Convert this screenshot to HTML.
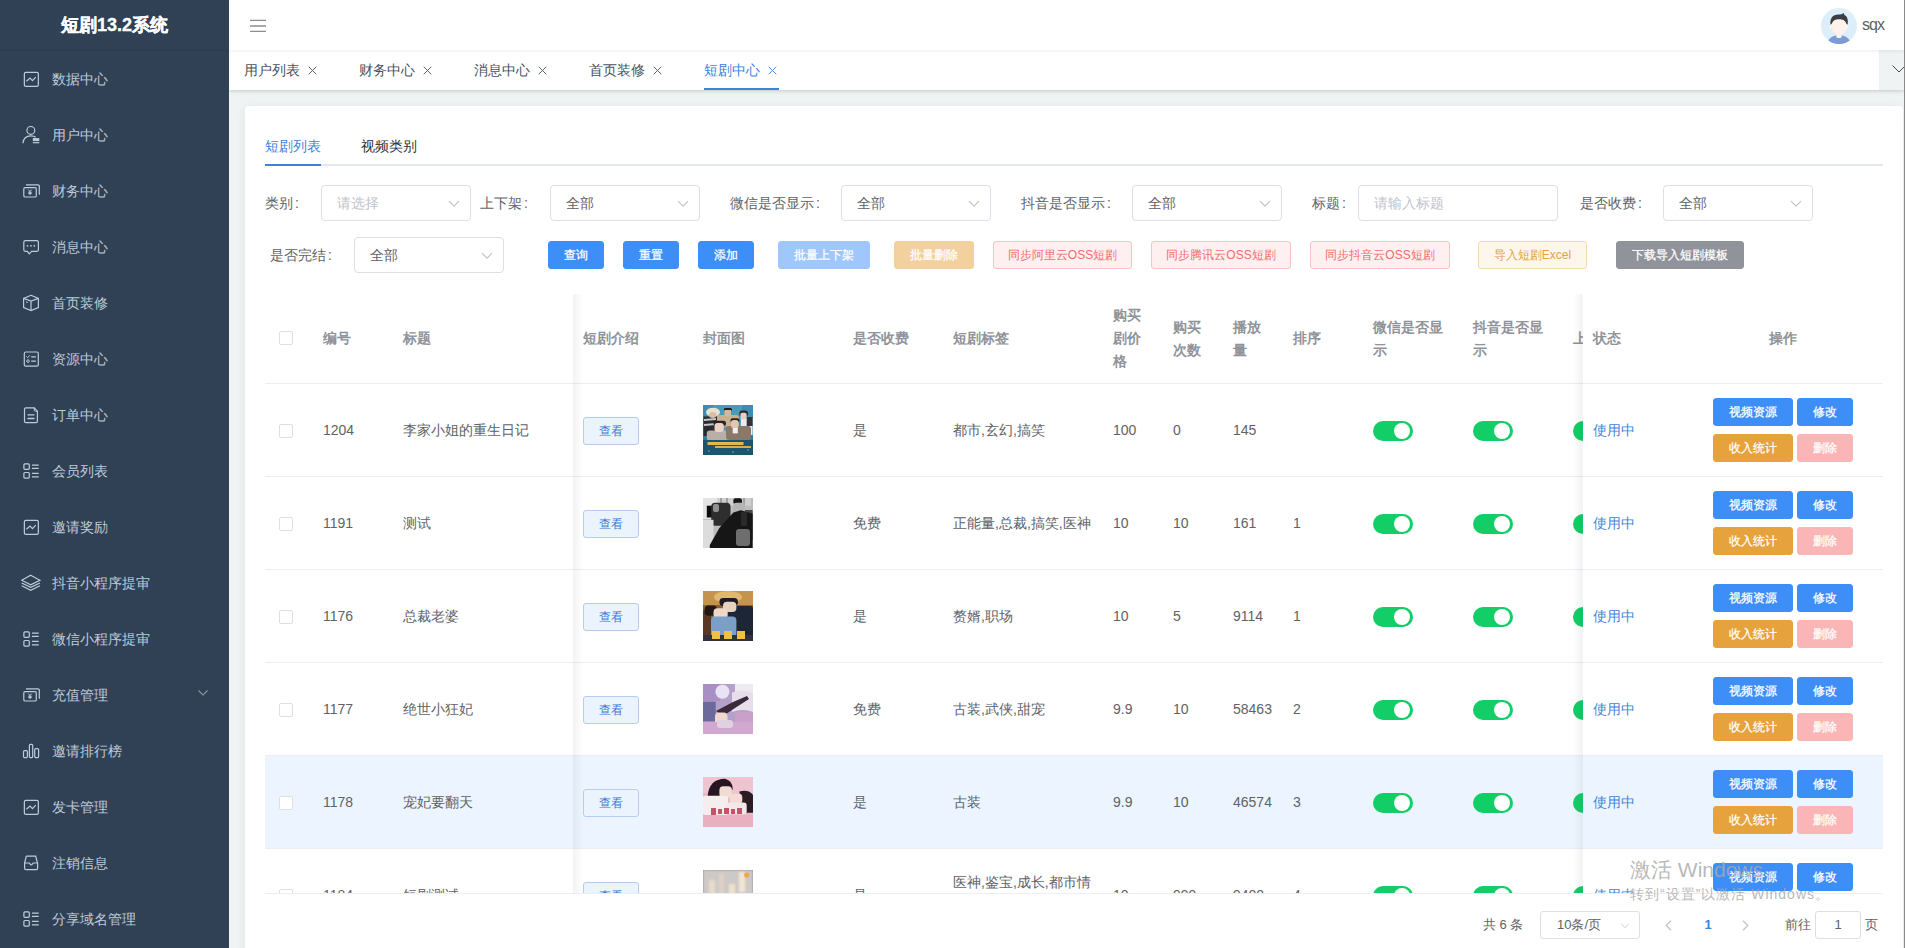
<!DOCTYPE html><html><head><meta charset="utf-8"><style>*{box-sizing:border-box;margin:0;padding:0}
html,body{width:1905px;height:948px;overflow:hidden;background:#eff3f4;font-family:"Liberation Sans",sans-serif;font-size:14px;color:#606266;position:relative}
.a{position:absolute}
#sb{left:0;top:0;width:229px;height:948px;background:#304156;z-index:10}
#logo{left:0;top:0;width:229px;height:50px;background:#304156;color:#fff;font-weight:bold;-webkit-text-stroke:.3px #fff;font-size:18px;line-height:50px;text-align:center;box-shadow:0 1px 0 rgba(0,0,0,.05)}
.mi{left:0;width:229px;height:56px;line-height:56px;color:#bfcbd9;font-size:14px}
.mi span{position:absolute;left:52px;top:1px}
.mi svg{position:absolute;left:21px;top:19px;width:20px;height:20px;fill:none;stroke:#bfcbd9;stroke-width:1.2}
.mi svg.chev{left:198px;top:24px;width:10px;height:6px;stroke:#909399;stroke-width:1.1}
#nav{left:229px;top:0;width:1676px;height:50px;background:#fff;box-shadow:0 1px 4px rgba(0,0,0,.08);z-index:8}
#tags{left:229px;top:50px;width:1676px;height:40px;background:#fff;box-shadow:0 1px 3px 0 rgba(0,0,0,.12),0 2px 6px 0 rgba(0,0,0,.05);z-index:7}
.tg{top:0;height:40px;line-height:40px;font-size:14px;white-space:nowrap}
#card{left:245px;top:106px;width:1658px;height:900px;background:#fff;border-radius:4px;box-shadow:0 2px 12px 0 rgba(0,0,0,.06)}
.lbl b{font-weight:normal;margin-left:2px}
.lbl{height:36px;line-height:36px;color:#606266;font-size:14px;white-space:nowrap}
.sel{height:36px;border:1px solid #dcdfe6;border-radius:4px;background:#fff;line-height:34px;padding-left:15px;color:#606266;font-size:14px;white-space:nowrap}
.sel.ph{color:#c0c4cc}
.sel svg{position:absolute;right:10px;top:14px;width:12px;height:8px;fill:none;stroke:#c0c4cc;stroke-width:1.2}
.btn{height:28px;line-height:27px;border:1px solid transparent;border-radius:3px;font-size:12px;text-align:center;white-space:nowrap;color:#fff}
.bp{background:#3e8ef7;border-color:#3e8ef7}
.bpd{background:#9fc7fb;border-color:#9fc7fb}
.bwd{background:#f3d19e;border-color:#f3d19e}
.bdp{background:#fef0f0;border-color:#fbc4c4;color:#f56c6c}
.bwp{background:#fdf6ec;border-color:#f5dab1;color:#e6a23c}
.bi{background:#909399;border-color:#909399}
.bw{background:#e6a23c;border-color:#e6a23c}
.bdd{background:#fab6b6;border-color:#fab6b6}
.bpp{background:#ebf4fd;border-color:#b5cdee;color:#3a7ad6}
.th{font-weight:bold;color:#909399;line-height:23px;font-size:14px;white-space:nowrap}
.td{color:#606266;line-height:23px;font-size:14px;white-space:nowrap}
.hl{height:1px;background:#ebeef5}
.cb{width:14px;height:14px;border:1px solid #dcdfe6;border-radius:2px;background:#fff}
.sw{width:40px;height:20px;border-radius:10px;background:#13ce66}
.sw i{position:absolute;left:21px;top:2px;width:16px;height:16px;border-radius:50%;background:#fff}
.thumb{width:50px;height:50px;background:#888}
.t1{background:linear-gradient(180deg,#2f7d99 0%,#6f8a8e 30%,#b5a89a 55%,#3f5a66 75%,#1f5a78 100%)}
.t2{background:linear-gradient(135deg,#ddd 0%,#333 40%,#111 70%,#555 100%)}
.t3{background:linear-gradient(180deg,#b58a4a 0%,#7a5a3a 40%,#3a4a6a 70%,#2a2a3a 100%)}
.t4{background:linear-gradient(180deg,#a99ac8 0%,#c8b8d8 40%,#d8c8e0 70%,#c8a8d0 100%)}
.t5{background:linear-gradient(180deg,#e8b8c8 0%,#f0d8e0 40%,#f0c8d0 70%,#f0b8c8 100%)}
.t6{background:linear-gradient(90deg,#d0ccc8,#e8dcc8,#d0ccc8)}
.pg{height:28px;line-height:28px;font-size:13px;color:#606266;white-space:nowrap}
.psel{height:28px;width:100px;border:1px solid #dcdfe6;border-radius:3px;line-height:26px;padding-left:16px;font-size:13px;color:#606266;white-space:nowrap}
.psel svg{position:absolute;right:9px;top:11px;width:10px;height:6px;fill:none;stroke:#c0c4cc;stroke-width:1.1}
.wm1{font-size:21px;color:rgba(168,168,168,.82);white-space:nowrap;z-index:20}
.wm2{font-size:14px;letter-spacing:1px;color:rgba(168,168,168,.82);white-space:nowrap;z-index:20}

.bp,.bw,.bi,.bpd,.bwd,.bdd{-webkit-text-stroke:.25px #fff}
</style></head><body>
<div id="sb" class="a"><div id="logo" class="a">短剧13.2系统</div>
<div class="mi a" style="top:50px"><svg viewBox="0 0 20 20"><rect x="3.36" y="3.36" width="14" height="14.1" rx="1.6"/><path d="M5.4 12.2L9 9l2.5 2.7 3.2-3.5"/></svg><span>数据中心</span>
</div>
<div class="mi a" style="top:106px"><svg viewBox="0 0 20 20"><circle cx="9.85" cy="5.4" r="3.9"/><path d="M1.9 18.3C2.4 13.5 5.5 10.9 9.8 10.9c2 0 3.7.4 4.9 1.4"/><rect x="11.8" y="13.1" width="6.5" height="3" fill="#bfcbd9" stroke="none"/><rect x="11.8" y="17.1" width="6.5" height="1.2" fill="#bfcbd9" stroke="none"/></svg><span>用户中心</span>
</div>
<div class="mi a" style="top:162px"><svg viewBox="0 0 20 20"><rect x="2.8" y="6.6" width="12.5" height="9.4" rx="1.3"/><path d="M5 3.8H17a1.3 1.3 0 0 1 1.3 1.3V13.8"/><path d="M7.4 8.6L9 10.8 10.6 8.6M9 10.8V14M7.3 11.3H10.7M7.3 12.6H10.7" stroke-width="1"/></svg><span>财务中心</span>
</div>
<div class="mi a" style="top:218px"><svg viewBox="0 0 20 20"><path d="M4.4 3.6H15.8a1.6 1.6 0 0 1 1.6 1.6v7.6A1.6 1.6 0 0 1 15.8 14.4H10.6L8.2 16.8 6.4 14.4H4.4A1.6 1.6 0 0 1 2.8 12.8V5.2a1.6 1.6 0 0 1 1.6-1.6z"/><circle cx="6.5" cy="8.8" r=".9" fill="#bfcbd9" stroke="none"/><circle cx="10" cy="8.8" r=".9" fill="#bfcbd9" stroke="none"/><circle cx="13.3" cy="8.8" r=".9" fill="#bfcbd9" stroke="none"/></svg><span>消息中心</span>
</div>
<div class="mi a" style="top:274px"><svg viewBox="0 0 20 20"><path d="M10 2.3L17.4 5.4V14.6L10 17.6 2.6 14.6V5.4z"/><path d="M2.6 5.4L10 8 17.4 5.4M10 8V17.6"/><path d="M5 8.9L6.8 9.6" stroke-width="1"/></svg><span>首页装修</span>
</div>
<div class="mi a" style="top:330px"><svg viewBox="0 0 20 20"><rect x="3.3" y="3" width="14" height="14.2" rx="1.4"/><path d="M5.3 7.3L6.7 8.7 8.8 6.3" stroke-width="1"/><circle cx="7" cy="12.1" r="1.3" stroke-width="1"/><path d="M10.2 7.9H14.9M10.2 12.2H14.9" stroke-width="1.3"/></svg><span>资源中心</span>
</div>
<div class="mi a" style="top:386px"><svg viewBox="0 0 20 20"><path d="M4.9 2.9H13.3L16.4 6.2V16.2A1.4 1.4 0 0 1 15 17.6H4.9A1.4 1.4 0 0 1 3.5 16.2V4.3A1.4 1.4 0 0 1 4.9 2.9z"/><path d="M13.3 2.9V5a1.2 1.2 0 0 0 1.2 1.2H16.4" stroke-width="1"/><path d="M6.5 9.8H13.5M6.5 13.5H13.5" stroke-width="1.3"/></svg><span>订单中心</span>
</div>
<div class="mi a" style="top:442px"><svg viewBox="0 0 20 20"><rect x="2.9" y="2.9" width="5.4" height="5.4" rx="1"/><rect x="2.9" y="11.5" width="5.4" height="5.6" rx="1"/><path d="M10.9 4.1H17.7M10.9 7.3H17.7M10.9 12.4H17.7M10.9 15.9H17.7" stroke-width="1.2"/></svg><span>会员列表</span>
</div>
<div class="mi a" style="top:498px"><svg viewBox="0 0 20 20"><rect x="3.36" y="3.36" width="14" height="14.1" rx="1.6"/><path d="M5.4 12.2L9 9l2.5 2.7 3.2-3.5"/></svg><span>邀请奖励</span>
</div>
<div class="mi a" style="top:554px"><svg viewBox="0 0 20 20"><path d="M9.7 2.2L18.9 7.3 9.7 11.8 0.7 7.3z"/><path d="M0.7 10L9.7 14.4 18.9 10M0.7 12.7L9.7 17.4 18.9 12.7"/></svg><span>抖音小程序提审</span>
</div>
<div class="mi a" style="top:610px"><svg viewBox="0 0 20 20"><rect x="2.9" y="2.9" width="5.4" height="5.4" rx="1"/><rect x="2.9" y="11.5" width="5.4" height="5.6" rx="1"/><path d="M10.9 4.1H17.7M10.9 7.3H17.7M10.9 12.4H17.7M10.9 15.9H17.7" stroke-width="1.2"/></svg><span>微信小程序提审</span>
</div>
<div class="mi a" style="top:666px"><svg viewBox="0 0 20 20"><rect x="2.8" y="6.6" width="12.5" height="9.4" rx="1.3"/><path d="M5 3.8H17a1.3 1.3 0 0 1 1.3 1.3V13.8"/><path d="M7.4 8.6L9 10.8 10.6 8.6M9 10.8V14M7.3 11.3H10.7M7.3 12.6H10.7" stroke-width="1"/></svg><span>充值管理</span>
<svg class="chev" viewBox="0 0 10 6"><path d="M.5.5L5 5 9.5.5"/></svg>
</div>
<div class="mi a" style="top:722px"><svg viewBox="0 0 20 20"><rect x="2.5" y="9.7" width="3.9" height="6.9" rx="1"/><rect x="8.4" y="3.4" width="3.3" height="13.2" rx="1"/><rect x="13.7" y="7.6" width="3.9" height="9" rx="1"/></svg><span>邀请排行榜</span>
</div>
<div class="mi a" style="top:778px"><svg viewBox="0 0 20 20"><rect x="3.36" y="3.36" width="14" height="14.1" rx="1.6"/><path d="M5.4 12.2L9 9l2.5 2.7 3.2-3.5"/></svg><span>发卡管理</span>
</div>
<div class="mi a" style="top:834px"><svg viewBox="0 0 20 20"><path d="M5.3 3.2H14.7L16.4 10M5.3 3.2L3.6 10"/><path d="M3.6 10H8.2C8.9 10 9.2 12 10.2 12S11.6 10 12.3 10H16.6V15.3A1.3 1.3 0 0 1 15.3 16.6H4.9A1.3 1.3 0 0 1 3.6 15.3z"/></svg><span>注销信息</span>
</div>
<div class="mi a" style="top:890px"><svg viewBox="0 0 20 20"><rect x="2.9" y="2.9" width="5.4" height="5.4" rx="1"/><rect x="2.9" y="11.5" width="5.4" height="5.6" rx="1"/><path d="M10.9 4.1H17.7M10.9 7.3H17.7M10.9 12.4H17.7M10.9 15.9H17.7" stroke-width="1.2"/></svg><span>分享域名管理</span>
</div>
</div>
<div id="nav" class="a">
<svg class="a" style="left:21px;top:19px;width:16px;height:14px" viewBox="0 0 16 14"><path d="M0 1.3H16M0 7H16M0 12.4H16" stroke="#8b8e93" stroke-width="1.3"/></svg>
<svg class="a" style="left:1592px;top:8px;width:36px;height:36px" viewBox="0 0 36 36">
<defs><clipPath id="cc"><circle cx="18" cy="18" r="18"/></clipPath></defs>
<circle cx="18" cy="18" r="18" fill="#ddeefb"/>
<g clip-path="url(#cc)">
<path d="M5.5 37C7 30 12 27.3 18 27.3S29 30 30.5 37z" fill="#7b9bd6"/>
<path d="M15.3 23H20.7V29.2Q18 31 15.3 29.2z" fill="#fdf3ea"/>
<ellipse cx="18" cy="18.3" rx="8" ry="8" fill="#fdf3ea"/>
<ellipse cx="9.6" cy="18.8" rx="1.4" ry="1.8" fill="#fdf3ea"/><ellipse cx="26.4" cy="18.8" rx="1.4" ry="1.8" fill="#fdf3ea"/>
<path d="M9.4 16.8C8.8 9.5 12.5 6.6 17.5 6.6C19.5 6.6 21 5.9 22.8 4.9L23.4 6.9C26.3 8 27.4 11.5 26.6 16.8L25.2 15.6C24.6 12.5 21.8 11.2 18 11.2S11.6 12.5 10.9 15.6z" fill="#3a3d44"/>
</g></svg>
<div class="a" style="left:1633px;top:0;height:50px;line-height:50px;font-size:16px;letter-spacing:-1px;color:#606266">sqx</div>
</div>
<div class="a" style="left:1904px;top:0;width:1px;height:948px;background:#8a8a8a;z-index:50"></div>
<div id="tags" class="a">
<div class="tg a" style="left:15px;color:#495060">用户列表</div>
<svg class="a" style="left:79px;top:16px;width:9px;height:9px" viewBox="0 0 9 9"><path d="M.7.7L8.3 8.3M8.3.7L.7 8.3" stroke="#495060" stroke-width="1" opacity=".9"/></svg>
<div class="tg a" style="left:130px;color:#495060">财务中心</div>
<svg class="a" style="left:194px;top:16px;width:9px;height:9px" viewBox="0 0 9 9"><path d="M.7.7L8.3 8.3M8.3.7L.7 8.3" stroke="#495060" stroke-width="1" opacity=".9"/></svg>
<div class="tg a" style="left:245px;color:#495060">消息中心</div>
<svg class="a" style="left:309px;top:16px;width:9px;height:9px" viewBox="0 0 9 9"><path d="M.7.7L8.3 8.3M8.3.7L.7 8.3" stroke="#495060" stroke-width="1" opacity=".9"/></svg>
<div class="tg a" style="left:360px;color:#495060">首页装修</div>
<svg class="a" style="left:424px;top:16px;width:9px;height:9px" viewBox="0 0 9 9"><path d="M.7.7L8.3 8.3M8.3.7L.7 8.3" stroke="#495060" stroke-width="1" opacity=".9"/></svg>
<div class="tg a" style="left:475px;color:#3d82dd">短剧中心</div>
<svg class="a" style="left:539px;top:16px;width:9px;height:9px" viewBox="0 0 9 9"><path d="M.7.7L8.3 8.3M8.3.7L.7 8.3" stroke="#3d82dd" stroke-width="1" opacity=".9"/></svg>
<div class="a" style="left:475px;top:38px;width:75px;height:2px;background:#3d82dd"></div>
<div class="a" style="left:1650px;top:0;width:26px;height:40px;background:#eff3f4"></div>
<svg class="a" style="left:1663px;top:15px;width:14px;height:8px" viewBox="0 0 14 8"><path d="M.5.5L7 7 13.5.5" fill="none" stroke="#4a4d52" stroke-width="1"/></svg>
</div>
<div id="card" class="a">
<div class="a" style="left:20px;top:28px;line-height:24px;color:#3d82dd">短剧列表</div>
<div class="a" style="left:116px;top:28px;line-height:24px;color:#303133">视频类别</div>
<div class="a" style="left:20px;top:58px;width:1618px;height:2px;background:#e4e7ed"></div>
<div class="a" style="left:20px;top:58px;width:56px;height:2px;background:#3d82dd"></div>
<div class="lbl a" style="left:20px;top:79px">类别<b>:</b></div>
<div class="sel a ph" style="left:76px;top:79px;width:150px">请选择<svg viewBox="0 0 12 8"><path d="M1 1.2L6 6.2 11 1.2"/></svg></div>
<div class="lbl a" style="left:235px;top:79px">上下架<b>:</b></div>
<div class="sel a" style="left:305px;top:79px;width:150px">全部<svg viewBox="0 0 12 8"><path d="M1 1.2L6 6.2 11 1.2"/></svg></div>
<div class="lbl a" style="left:485px;top:79px">微信是否显示<b>:</b></div>
<div class="sel a" style="left:596px;top:79px;width:150px">全部<svg viewBox="0 0 12 8"><path d="M1 1.2L6 6.2 11 1.2"/></svg></div>
<div class="lbl a" style="left:776px;top:79px">抖音是否显示<b>:</b></div>
<div class="sel a" style="left:887px;top:79px;width:150px">全部<svg viewBox="0 0 12 8"><path d="M1 1.2L6 6.2 11 1.2"/></svg></div>
<div class="lbl a" style="left:1067px;top:79px">标题<b>:</b></div>
<div class="sel a ph" style="left:1113px;top:79px;width:200px">请输入标题</div>
<div class="lbl a" style="left:1335px;top:79px">是否收费<b>:</b></div>
<div class="sel a" style="left:1418px;top:79px;width:150px">全部<svg viewBox="0 0 12 8"><path d="M1 1.2L6 6.2 11 1.2"/></svg></div>
<div class="lbl a" style="left:25px;top:131px">是否完结<b>:</b></div>
<div class="sel a" style="left:109px;top:131px;width:150px">全部<svg viewBox="0 0 12 8"><path d="M1 1.2L6 6.2 11 1.2"/></svg></div>
<div class="btn bp a" style="left:303px;top:135px;width:56px">查询</div>
<div class="btn bp a" style="left:378px;top:135px;width:56px">重置</div>
<div class="btn bp a" style="left:453px;top:135px;width:56px">添加</div>
<div class="btn bpd a" style="left:533px;top:135px;width:92px">批量上下架</div>
<div class="btn bwd a" style="left:649px;top:135px;width:80px">批量删除</div>
<div class="btn bdp a" style="left:748px;top:135px;width:139px">同步阿里云OSS短剧</div>
<div class="btn bdp a" style="left:906px;top:135px;width:140px">同步腾讯云OSS短剧</div>
<div class="btn bdp a" style="left:1065px;top:135px;width:140px">同步抖音云OSS短剧</div>
<div class="btn bwp a" style="left:1233px;top:135px;width:109px">导入短剧Excel</div>
<div class="btn bi a" style="left:1371px;top:135px;width:128px">下载导入短剧模板</div>
<div id="tbl" class="a" style="left:20px;top:188px;width:1618px;height:599px;overflow:hidden">
<div class="th a" style="left:58px;top:33.0px">编号</div>
<div class="th a" style="left:138px;top:33.0px">标题</div>
<div class="th a" style="left:318px;top:33.0px">短剧介绍</div>
<div class="th a" style="left:438px;top:33.0px">封面图</div>
<div class="th a" style="left:588px;top:33.0px">是否收费</div>
<div class="th a" style="left:688px;top:33.0px">短剧标签</div>
<div class="th a" style="left:848px;top:10.0px">购买<br>剧价<br>格</div>
<div class="th a" style="left:908px;top:21.5px">购买<br>次数</div>
<div class="th a" style="left:968px;top:21.5px">播放<br>量</div>
<div class="th a" style="left:1028px;top:33.0px">排序</div>
<div class="th a" style="left:1108px;top:21.5px">微信是否显<br>示</div>
<div class="th a" style="left:1208px;top:21.5px">抖音是否显<br>示</div>
<div class="th a" style="left:1308px;top:33.0px">上下架</div>
<div class="cb a" style="left:14px;top:37px"></div>
<div class="hl a" style="left:0;top:89px;width:1618px"></div>
<div class="a" style="left:0;top:90px;width:1618px;height:92px;background:#fff"></div>
<div class="hl a" style="left:0;top:182px;width:1618px"></div>
<div class="cb a" style="left:14px;top:129.5px"></div>
<div class="td a" style="left:58px;top:125.0px">1204</div>
<div class="td a" style="left:138px;top:125.0px">李家小姐的重生日记</div>
<div class="btn bpp a" style="left:318px;top:122.5px;width:56px">查看</div>
<div class="thumb a" style="left:438px;top:111.0px"><svg viewBox="0 0 50 50" width="50" height="50" style="display:block"><defs><filter id="b1" x="-10%" y="-10%" width="120%" height="120%"><feGaussianBlur stdDeviation="0.45"/></filter></defs><g filter="url(#b1)">
<rect width="50" height="50" fill="#2f7a9c"/>
<path d="M25 0L18 36 0 20V0zM25 0L32 36 50 18V0z" fill="#3d8db0"/>
<path d="M25 0L22 36 10 0zM25 0L28 36 40 0z" fill="#4b9ab8"/>
<rect x="0.5" y="11.4" width="13.5" height="19.6" fill="#2c2c30"/>
<path d="M1 14L13 13 13 15 1 16zM1 19L13 18 13 20 1 21z" fill="#c8c8c8"/>
<ellipse cx="10" cy="7.2" rx="7" ry="4.5" fill="#e8e2cc"/>
<ellipse cx="9.7" cy="10" rx="3.7" ry="3" fill="#d8c0a8"/>
<rect x="14" y="10" width="22" height="11.8" rx="3" fill="#c8b090"/>
<rect x="20.8" y="3" width="8.2" height="3" rx="1.5" fill="#1e1e24"/>
<rect x="21.5" y="5" width="6.5" height="6.4" fill="#d8b898"/>
<rect x="37.8" y="13" width="11.8" height="17" fill="#e6eef0"/>
<rect x="36.3" y="5.5" width="8.7" height="6.5" rx="3" fill="#2a2a30"/>
<rect x="37.4" y="7.7" width="6.3" height="6.7" rx="2" fill="#e8d0c0"/>
<rect x="43.7" y="12" width="5.9" height="9" fill="#303038"/>
<rect x="3.8" y="25.5" width="26.6" height="10.3" rx="3" fill="#b8b0a8"/>
<rect x="10.5" y="15.8" width="12.5" height="5.2" rx="2.5" fill="#2a2228"/>
<rect x="11.5" y="18" width="9.3" height="9" rx="3" fill="#ecd4c4"/>
<rect x="23" y="21" width="25" height="14" rx="3" fill="#8a7868"/>
<rect x="29.7" y="21" width="5.1" height="7.4" fill="#f0f0f0"/>
<rect x="27.5" y="13.3" width="8.8" height="4.7" rx="2" fill="#242028"/>
<rect x="28" y="15" width="7.6" height="8" rx="2.5" fill="#e0c8b0"/>
<rect x="0" y="35" width="50" height="15" fill="#1c5470"/>
<rect x="4.5" y="37" width="36" height="3" fill="#e0b850"/>
<rect x="12" y="41" width="36" height="2" fill="#d0b050"/>
<circle cx="6" cy="46" r=".8" fill="#8ab"/><circle cx="30" cy="47" r=".8" fill="#8ab"/><circle cx="45" cy="45" r=".8" fill="#8ab"/>
</g></svg></div>
<div class="td a" style="left:588px;top:125.0px">是</div>
<div class="td a" style="left:688px;top:125.0px">都市,玄幻,搞笑</div>
<div class="td a" style="left:848px;top:125.0px">100</div>
<div class="td a" style="left:908px;top:125.0px">0</div>
<div class="td a" style="left:968px;top:125.0px">145</div>
<div class="td a" style="left:1028px;top:125.0px"></div>
<div class="sw a" style="left:1108px;top:126.5px"><i></i></div>
<div class="sw a" style="left:1208px;top:126.5px"><i></i></div>
<div class="sw a" style="left:1308px;top:126.5px"><i></i></div>
<div class="a" style="left:0;top:183px;width:1618px;height:92px;background:#fff"></div>
<div class="hl a" style="left:0;top:275px;width:1618px"></div>
<div class="cb a" style="left:14px;top:222.5px"></div>
<div class="td a" style="left:58px;top:218.0px">1191</div>
<div class="td a" style="left:138px;top:218.0px">测试</div>
<div class="btn bpp a" style="left:318px;top:215.5px;width:56px">查看</div>
<div class="thumb a" style="left:438px;top:204.0px"><svg viewBox="0 0 50 50" width="50" height="50" style="display:block"><defs><filter id="b2" x="-10%" y="-10%" width="120%" height="120%"><feGaussianBlur stdDeviation="0.5"/></filter></defs><g filter="url(#b2)">
<rect width="50" height="50" fill="#bcbcbc"/>
<rect x="0" y="0" width="15.6" height="21" fill="#e4e4e4"/>
<rect x="14" y="0" width="34" height="7.7" fill="#cfcfcf"/>
<path d="M17 0h2v8h-2zM23 0h2v8h-2zM40 0h2v9h-2z" fill="#a0a0a0"/>
<rect x="3.8" y="7.7" width="5.9" height="11.8" fill="#101010"/>
<rect x="8.2" y="4.8" width="19.3" height="23" rx="4" fill="#2e2e2e"/>
<rect x="10" y="6" width="6" height="8" rx="2" fill="#909090"/>
<rect x="30.4" y="0.3" width="8.6" height="6" rx="2" fill="#141414"/>
<rect x="30.4" y="4.8" width="11.6" height="14" rx="3" fill="#b4b4b4"/>
<rect x="42" y="12" width="7.6" height="29.7" fill="#4a4a4a"/>
<rect x="0" y="21.8" width="10.5" height="28.2" fill="#dcdcdc"/>
<path d="M6.8 46.9L16.4 29.9 30.4 14.4 37.8 12.2 49.6 15.8 49.6 50 6.8 50z" fill="#141414"/>
<rect x="33" y="31" width="14" height="17" rx="3" fill="#6e6e6e"/>
<rect x="38" y="14" width="6" height="14" fill="#2a2a2a"/>
</g></svg></div>
<div class="td a" style="left:588px;top:218.0px">免费</div>
<div class="td a" style="left:688px;top:218.0px">正能量,总裁,搞笑,医神</div>
<div class="td a" style="left:848px;top:218.0px">10</div>
<div class="td a" style="left:908px;top:218.0px">10</div>
<div class="td a" style="left:968px;top:218.0px">161</div>
<div class="td a" style="left:1028px;top:218.0px">1</div>
<div class="sw a" style="left:1108px;top:219.5px"><i></i></div>
<div class="sw a" style="left:1208px;top:219.5px"><i></i></div>
<div class="sw a" style="left:1308px;top:219.5px"><i></i></div>
<div class="a" style="left:0;top:276px;width:1618px;height:92px;background:#fff"></div>
<div class="hl a" style="left:0;top:368px;width:1618px"></div>
<div class="cb a" style="left:14px;top:315.5px"></div>
<div class="td a" style="left:58px;top:311.0px">1176</div>
<div class="td a" style="left:138px;top:311.0px">总裁老婆</div>
<div class="btn bpp a" style="left:318px;top:308.5px;width:56px">查看</div>
<div class="thumb a" style="left:438px;top:297.0px"><svg viewBox="0 0 50 50" width="50" height="50" style="display:block"><defs><filter id="b3" x="-10%" y="-10%" width="120%" height="120%"><feGaussianBlur stdDeviation="0.55"/></filter></defs><g filter="url(#b3)">
<rect width="50" height="50" fill="#8a6030"/>
<rect x="0" y="0" width="50" height="14" fill="#c49450"/>
<ellipse cx="25" cy="6" rx="14" ry="6" fill="#e0b870"/>
<rect x="0" y="19.5" width="8" height="30.5" fill="#5a3820"/>
<rect x="25" y="15" width="25" height="35" rx="3" fill="#1e2636"/>
<rect x="16.4" y="7" width="18.6" height="8" rx="4" fill="#1a1a22"/>
<rect x="20" y="10.7" width="13.4" height="10.3" rx="4" fill="#e6d2be"/>
<rect x="1.6" y="14.4" width="12.4" height="10.3" rx="4" fill="#201818"/>
<rect x="10.5" y="17.3" width="14" height="10.4" rx="4" fill="#f0d8c8"/>
<rect x="8" y="25.5" width="25.4" height="24.5" rx="4" fill="#7aa0c8"/>
<rect x="0" y="44" width="50" height="6" fill="#30303c"/>
<path d="M9 40h8v8h-8zM21 40h8v8h-8zM34 40h8v8h-8z" fill="#f0c040"/>
</g></svg></div>
<div class="td a" style="left:588px;top:311.0px">是</div>
<div class="td a" style="left:688px;top:311.0px">赘婿,职场</div>
<div class="td a" style="left:848px;top:311.0px">10</div>
<div class="td a" style="left:908px;top:311.0px">5</div>
<div class="td a" style="left:968px;top:311.0px">9114</div>
<div class="td a" style="left:1028px;top:311.0px">1</div>
<div class="sw a" style="left:1108px;top:312.5px"><i></i></div>
<div class="sw a" style="left:1208px;top:312.5px"><i></i></div>
<div class="sw a" style="left:1308px;top:312.5px"><i></i></div>
<div class="a" style="left:0;top:369px;width:1618px;height:92px;background:#fff"></div>
<div class="hl a" style="left:0;top:461px;width:1618px"></div>
<div class="cb a" style="left:14px;top:408.5px"></div>
<div class="td a" style="left:58px;top:404.0px">1177</div>
<div class="td a" style="left:138px;top:404.0px">绝世小狂妃</div>
<div class="btn bpp a" style="left:318px;top:401.5px;width:56px">查看</div>
<div class="thumb a" style="left:438px;top:390.0px"><svg viewBox="0 0 50 50" width="50" height="50" style="display:block"><defs><filter id="b4" x="-10%" y="-10%" width="120%" height="120%"><feGaussianBlur stdDeviation="0.55"/></filter></defs><g filter="url(#b4)">
<rect width="50" height="50" fill="#b4a0c8"/>
<rect x="0" y="0" width="17" height="17" fill="#a890c4"/>
<circle cx="19.4" cy="7.8" r="7" fill="#e8e4f4"/>
<rect x="32" y="0" width="18" height="14" fill="#eeeaf2"/>
<path d="M29 8.5Q42 4 50 10V28Q40 24 29 28z" fill="#e6deea"/>
<rect x="0" y="17.7" width="12.7" height="19.6" fill="#6c6a9a"/>
<path d="M13 27L30 18 44 12 46 15 32 24 20 32z" fill="#3a2a3a"/>
<rect x="12" y="28.4" width="12.5" height="13.3" rx="4" fill="#f0d8d0"/>
<rect x="32" y="28" width="18" height="22" fill="#c8a0c8"/>
<rect x="0" y="38" width="50" height="12" fill="#d0a8d0"/>
<rect x="14" y="36" width="16" height="8" rx="3" fill="#e0d0e0"/>
</g></svg></div>
<div class="td a" style="left:588px;top:404.0px">免费</div>
<div class="td a" style="left:688px;top:404.0px">古装,武侠,甜宠</div>
<div class="td a" style="left:848px;top:404.0px">9.9</div>
<div class="td a" style="left:908px;top:404.0px">10</div>
<div class="td a" style="left:968px;top:404.0px">58463</div>
<div class="td a" style="left:1028px;top:404.0px">2</div>
<div class="sw a" style="left:1108px;top:405.5px"><i></i></div>
<div class="sw a" style="left:1208px;top:405.5px"><i></i></div>
<div class="sw a" style="left:1308px;top:405.5px"><i></i></div>
<div class="a" style="left:0;top:462px;width:1618px;height:92px;background:#ecf5ff"></div>
<div class="hl a" style="left:0;top:554px;width:1618px"></div>
<div class="cb a" style="left:14px;top:501.5px"></div>
<div class="td a" style="left:58px;top:497.0px">1178</div>
<div class="td a" style="left:138px;top:497.0px">宠妃要翻天</div>
<div class="btn bpp a" style="left:318px;top:494.5px;width:56px">查看</div>
<div class="thumb a" style="left:438px;top:483.0px"><svg viewBox="0 0 50 50" width="50" height="50" style="display:block"><defs><filter id="b5" x="-10%" y="-10%" width="120%" height="120%"><feGaussianBlur stdDeviation="0.55"/></filter></defs><g filter="url(#b5)">
<rect width="50" height="50" fill="#e8b8c8"/>
<rect x="0" y="0" width="50" height="16" fill="#eec4d0"/>
<path d="M4.6 19.5Q6 2 22 1.8Q30 4 29.7 12L26 19.5z" fill="#281820"/>
<rect x="16.4" y="9.2" width="12.6" height="11.8" rx="4" fill="#f0dcd4"/>
<rect x="0" y="18.8" width="25" height="19.2" rx="2" fill="#f4eeee"/>
<path d="M36.3 14.4Q46 12 50 18V35.8H40z" fill="#2a1e24"/>
<rect x="26.7" y="16.6" width="12.6" height="10.4" rx="4" fill="#f4dcd4"/>
<rect x="23" y="25.5" width="20.7" height="11.8" rx="3" fill="#f0e8ea"/>
<rect x="0" y="38" width="50" height="12" fill="#eab0c0"/>
</g><path d="M8 31h5v7h-5zM15 32h4v5h-4zM21 31h5v6h-5zM28 32h4v5h-4zM34 31h5v6h-5z" fill="#c02848" opacity=".8"/></svg></div>
<div class="td a" style="left:588px;top:497.0px">是</div>
<div class="td a" style="left:688px;top:497.0px">古装</div>
<div class="td a" style="left:848px;top:497.0px">9.9</div>
<div class="td a" style="left:908px;top:497.0px">10</div>
<div class="td a" style="left:968px;top:497.0px">46574</div>
<div class="td a" style="left:1028px;top:497.0px">3</div>
<div class="sw a" style="left:1108px;top:498.5px"><i></i></div>
<div class="sw a" style="left:1208px;top:498.5px"><i></i></div>
<div class="sw a" style="left:1308px;top:498.5px"><i></i></div>
<div class="a" style="left:0;top:555px;width:1618px;height:92px;background:#fff"></div>
<div class="hl a" style="left:0;top:647px;width:1618px"></div>
<div class="cb a" style="left:14px;top:594.5px"></div>
<div class="td a" style="left:58px;top:590.0px">1184</div>
<div class="td a" style="left:138px;top:590.0px">短剧测试</div>
<div class="btn bpp a" style="left:318px;top:587.5px;width:56px">查看</div>
<div class="thumb a" style="left:438px;top:576.0px"><svg viewBox="0 0 50 50" width="50" height="50" style="display:block"><defs><filter id="b6" x="-10%" y="-10%" width="120%" height="120%"><feGaussianBlur stdDeviation="1.2"/></filter></defs><g filter="url(#b6)">
<rect width="50" height="50" fill="#cdc9c6"/>
<rect x="6" y="10" width="6" height="30" fill="#e6dccc"/>
<rect x="16" y="4" width="5" height="40" fill="#dcd2c8"/>
<rect x="26" y="14" width="6" height="30" fill="#efe2cc"/>
<rect x="36" y="2" width="6" height="20" fill="#f0e6d4"/>
</g><circle cx="43.7" cy="5" r="2.6" fill="#f0a848"/></svg></div>
<div class="td a" style="left:588px;top:590.0px">是</div>
<div class="td a" style="left:688px;top:577.0px">医神,鉴宝,成长,都市情<br>感</div>
<div class="td a" style="left:848px;top:590.0px">10</div>
<div class="td a" style="left:908px;top:590.0px">999</div>
<div class="td a" style="left:968px;top:590.0px">9400</div>
<div class="td a" style="left:1028px;top:590.0px">4</div>
<div class="sw a" style="left:1108px;top:591.5px"><i></i></div>
<div class="sw a" style="left:1208px;top:591.5px"><i></i></div>
<div class="sw a" style="left:1308px;top:591.5px"><i></i></div>
</div>
<div class="a" style="left:328px;top:188px;width:10px;height:599px;background:linear-gradient(90deg,rgba(0,0,0,.05),rgba(0,0,0,0));z-index:3"></div>
<div id="fr" class="a" style="left:1338px;top:188px;width:300px;height:599px;overflow:hidden;background:#fff;z-index:4">
<div class="th a" style="left:10px;top:33.0px">状态</div>
<div class="th a" style="left:100px;top:33.0px;width:200px;text-align:center">操作</div>
<div class="hl a" style="left:0;top:89px;width:300px"></div>
<div class="a" style="left:0;top:90px;width:300px;height:92px;background:#fff"></div>
<div class="hl a" style="left:0;top:182px;width:300px"></div>
<div class="td a" style="left:10px;top:125.0px;color:#4384d6">使用中</div>
<div class="btn bp a" style="left:130px;top:104px;width:80px">视频资源</div>
<div class="btn bp a" style="left:214px;top:104px;width:56px">修改</div>
<div class="btn bw a" style="left:130px;top:140px;width:80px">收入统计</div>
<div class="btn bdd a" style="left:214px;top:140px;width:56px">删除</div>
<div class="a" style="left:0;top:183px;width:300px;height:92px;background:#fff"></div>
<div class="hl a" style="left:0;top:275px;width:300px"></div>
<div class="td a" style="left:10px;top:218.0px;color:#4384d6">使用中</div>
<div class="btn bp a" style="left:130px;top:197px;width:80px">视频资源</div>
<div class="btn bp a" style="left:214px;top:197px;width:56px">修改</div>
<div class="btn bw a" style="left:130px;top:233px;width:80px">收入统计</div>
<div class="btn bdd a" style="left:214px;top:233px;width:56px">删除</div>
<div class="a" style="left:0;top:276px;width:300px;height:92px;background:#fff"></div>
<div class="hl a" style="left:0;top:368px;width:300px"></div>
<div class="td a" style="left:10px;top:311.0px;color:#4384d6">使用中</div>
<div class="btn bp a" style="left:130px;top:290px;width:80px">视频资源</div>
<div class="btn bp a" style="left:214px;top:290px;width:56px">修改</div>
<div class="btn bw a" style="left:130px;top:326px;width:80px">收入统计</div>
<div class="btn bdd a" style="left:214px;top:326px;width:56px">删除</div>
<div class="a" style="left:0;top:369px;width:300px;height:92px;background:#fff"></div>
<div class="hl a" style="left:0;top:461px;width:300px"></div>
<div class="td a" style="left:10px;top:404.0px;color:#4384d6">使用中</div>
<div class="btn bp a" style="left:130px;top:383px;width:80px">视频资源</div>
<div class="btn bp a" style="left:214px;top:383px;width:56px">修改</div>
<div class="btn bw a" style="left:130px;top:419px;width:80px">收入统计</div>
<div class="btn bdd a" style="left:214px;top:419px;width:56px">删除</div>
<div class="a" style="left:0;top:462px;width:300px;height:92px;background:#ecf5ff"></div>
<div class="hl a" style="left:0;top:554px;width:300px"></div>
<div class="td a" style="left:10px;top:497.0px;color:#4384d6">使用中</div>
<div class="btn bp a" style="left:130px;top:476px;width:80px">视频资源</div>
<div class="btn bp a" style="left:214px;top:476px;width:56px">修改</div>
<div class="btn bw a" style="left:130px;top:512px;width:80px">收入统计</div>
<div class="btn bdd a" style="left:214px;top:512px;width:56px">删除</div>
<div class="a" style="left:0;top:555px;width:300px;height:92px;background:#fff"></div>
<div class="hl a" style="left:0;top:647px;width:300px"></div>
<div class="td a" style="left:10px;top:590.0px;color:#4384d6">使用中</div>
<div class="btn bp a" style="left:130px;top:569px;width:80px">视频资源</div>
<div class="btn bp a" style="left:214px;top:569px;width:56px">修改</div>
<div class="btn bw a" style="left:130px;top:605px;width:80px">收入统计</div>
<div class="btn bdd a" style="left:214px;top:605px;width:56px">删除</div>
</div>
<div class="a" style="left:1328px;top:188px;width:10px;height:599px;background:linear-gradient(270deg,rgba(0,0,0,.05),rgba(0,0,0,0));z-index:5"></div>
<div class="hl a" style="left:20px;top:787px;width:1618px;z-index:6"></div>
<div class="a pg" style="left:1238px;top:805px">共 6 条</div>
<div class="a psel" style="left:1295px;top:805px">10条/页<svg viewBox="0 0 12 8"><path d="M1 1.2L6 6.2 11 1.2"/></svg></div>
<svg class="a" style="left:1419px;top:814px;width:9px;height:11px" viewBox="0 0 9 11"><path d="M7 .8L2.2 5.5 7 10.2" fill="none" stroke="#c0c4cc" stroke-width="1.3"/></svg>
<div class="a pg" style="left:1451px;top:805px;width:24px;text-align:center;color:#3d82dd;font-weight:bold">1</div>
<svg class="a" style="left:1496px;top:814px;width:9px;height:11px" viewBox="0 0 9 11"><path d="M2 .8L6.8 5.5 2 10.2" fill="none" stroke="#c0c4cc" stroke-width="1.3"/></svg>
<div class="a pg" style="left:1540px;top:805px">前往</div>
<div class="a psel" style="left:1570px;top:805px;width:46px;padding:0;text-align:center">1</div>
<div class="a pg" style="left:1620px;top:805px">页</div>
</div>
<div class="a wm1" style="left:1630px;top:856px">激活 Windows</div>
<div class="a wm2" style="left:1630px;top:886px">转到“设置”以激活 Windows。</div>
</body></html>
